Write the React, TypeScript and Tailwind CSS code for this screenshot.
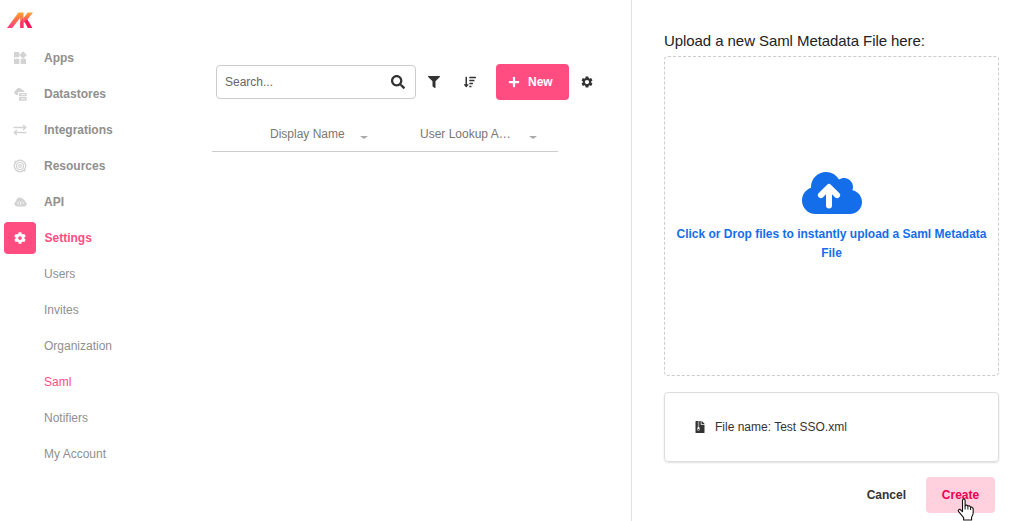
import type { ReactNode } from "react";
import { FaSearch, FaFilter, FaSortAmountDown, FaPlus, FaCog, FaFileArchive } from "react-icons/fa";
import { MdWidgets, MdSettings } from "react-icons/md";

function Logo() {
  return (
    <svg width="26" height="16" viewBox="0 0 26 16">
      <defs>
        <linearGradient id="flame" x1="0" y1="0" x2="0" y2="1">
          <stop offset="0" stopColor="#ffa52e" />
          <stop offset="0.5" stopColor="#ff6a4f" />
          <stop offset="1" stopColor="#ff3d83" />
        </linearGradient>
      </defs>
      <path d="M0 16L11.5 0.5H16.5V16H13.2V5.8L5.2 16Z" fill="url(#flame)" />
      <path d="M16.5 6L20.8 0.5H26L19.6 8.6L16.5 11.2Z" fill="url(#flame)" />
      <path d="M17.4 9.6L20.4 7.2L25.4 16H20.8Z" fill="#f21b5b" />
      <path d="M13.2 10.5L16.5 6V16H13.2Z" fill="#fb2f62" opacity=".75" />
    </svg>
  );
}

function DatastoreIcon() {
  return (
    <svg width="13" height="13" viewBox="0 0 13 13" fill="currentColor">
      <path d="M2.4 7A2.3 2.3 0 0 1 1.6 2.6 3.6 3.6 0 0 1 8.2 2 2.2 2.2 0 0 1 10.5 4H5.2Q4 4 4 5.2V7Z" />
      <path fillRule="evenodd" d="M5.5 5H12a.6.6 0 0 1 .6.6v2.6H5V5.6A.6.6 0 0 1 5.5 5ZM7 6.3v.8h4.2v-.8Z" />
      <path fillRule="evenodd" d="M5 9H12.6v3.2a.6.6 0 0 1-.6.6H5.6a.6.6 0 0 1-.6-.6ZM7 10.5v.8h4.2v-.8Z" />
    </svg>
  );
}

function TransferIcon() {
  return (
    <svg width="14" height="12" viewBox="0 0 14 12" fill="none" stroke="currentColor" strokeWidth="1.6" strokeLinecap="round" strokeLinejoin="round">
      <path d="M1.2 3.5H12M10.6 1.5L12.7 3.5L10.6 5.5M12.8 8.5H2M3.4 6.5L1.3 8.5L3.4 10.5" />
    </svg>
  );
}

function TargetIcon() {
  return (
    <svg width="14" height="14" viewBox="0 0 14 14" fill="none" stroke="currentColor">
      <circle cx="7" cy="7" r="5.7" strokeWidth="1.4" />
      <circle cx="7" cy="7" r="3.5" strokeWidth="1.2" />
      <circle cx="7" cy="7" r="1.3" strokeWidth="1.2" />
      <path d="M1.8 2.2L2.8 3.2M11.2 11L12.2 12" strokeWidth="2" />
    </svg>
  );
}

function CloudCodeIcon() {
  return (
    <svg width="13" height="10" viewBox="0 0 13 10">
      <path d="M3 9.5A2.8 2.8 0 0 1 2 4.2 3.7 3.7 0 0 1 8.6 2 2.2 2.2 0 0 1 10.9 4.6 2.5 2.5 0 0 1 10.4 9.5Z" fill="currentColor" />
      <path d="M4.8 4.6L3.5 6L4.8 7.4M8.2 4.6L9.5 6L8.2 7.4M7 4.3L6 7.7" fill="none" stroke="#fff" strokeWidth=".8" />
    </svg>
  );
}

function UploadCloud() {
  return (
    <svg width="60" height="42" viewBox="0 32 640 448" className="shrink-0">
      <path
        d="M537.6 226.6c4.1-10.7 6.4-22.4 6.4-34.6 0-53-43-96-96-96-19.7 0-38.1 6-53.3 16.2C367 64.2 315.3 32 256 32c-88.4 0-160 71.6-160 160 0 2.7.1 5.4.2 8.1C40.2 219.8 0 273.2 0 336c0 79.5 64.5 144 144 144h368c70.7 0 128-57.3 128-128 0-61.9-44-113.6-102.4-125.4z"
        fill="currentColor"
      />
      <path d="M288 388V200M202 278L288 192L374 278" fill="none" stroke="#fff" strokeWidth="64" strokeLinecap="round" strokeLinejoin="round" />
    </svg>
  );
}

function HandCursor() {
  return (
    <svg className="absolute left-[31px] top-[21px]" width="18" height="24" viewBox="0 0 18 24">
      <path
        d="M5.5 2.2Q5.5 1 6.8 1T8.1 2.2V8Q8.3 7 9.5 7.1T10.9 8.4Q11.2 7.6 12.3 7.9T13.6 9.4Q14 8.9 14.9 9.3T16.2 10.8V14.8Q16.2 17 14.6 19V22H6.6V19.6L1.7 13.6Q.8 12.2 1.8 11.6T4.1 12.3L5.5 13.7Z"
        fill="#fff" stroke="#111" strokeWidth="1.1" strokeLinejoin="round"
      />
      <path d="M8.1 8V11.5M10.9 8.6V11.5M13.6 9.5V12" stroke="#111" strokeWidth="1" />
    </svg>
  );
}

const sections: { label: string; icon: ReactNode }[] = [
  { label: "Apps", icon: <MdWidgets size={16} /> },
  { label: "Datastores", icon: <DatastoreIcon /> },
  { label: "Integrations", icon: <TransferIcon /> },
  { label: "Resources", icon: <TargetIcon /> },
  { label: "API", icon: <CloudCodeIcon /> },
];
const settings = ["Users", "Invites", "Organization", "Saml", "Notifiers", "My Account"];

function Caret() {
  return <span className="mt-[7px] h-0 w-0 border-x-[4px] border-t-[3px] border-x-transparent border-t-[#aaa]" />;
}

export default function App() {
  return (
    <div className="flex h-[521px] w-[1029px] overflow-hidden bg-white font-['Liberation_Sans',Arial,sans-serif] text-[12px] text-[#333]">
      <aside className="w-[200px] shrink-0 text-[#8f8f8f]">
        <div className="flex h-10 items-start pl-[7px] pt-3"><Logo /></div>
        <nav>
          {sections.map((s) => (
            <div key={s.label} className="flex h-9 items-center gap-2 pl-1 font-bold">
              <span className="flex w-8 justify-center text-[#d3d3d3]">{s.icon}</span>
              {s.label}
            </div>
          ))}
          <div className="flex h-9 items-center gap-[8.5px] pl-1 font-bold text-[#ff4d82]">
            <span className="flex h-8 w-8 items-center justify-center rounded bg-[#ff4d82] text-white"><FaCog size={12} /></span>
            Settings
          </div>
          {settings.map((s) => (
            <div key={s} className={`flex h-9 items-center pl-11 ${s === "Saml" ? "text-[#ff4d82]" : ""}`}>{s}</div>
          ))}
        </nav>
      </aside>

      <main className="w-[431px] shrink-0 pl-3 pt-16">
        <div className="flex h-9 items-center pl-1">
          <div className="flex h-[34px] w-[200px] items-center justify-between rounded border border-[#ccc] pl-2 pr-[10px] text-[#666]">
            Search...
            <FaSearch size={14} className="text-[#333]" />
          </div>
          <FaFilter size={12} className="ml-3 text-[#333]" />
          <FaSortAmountDown size={12} className="ml-6 text-[#333]" />
          <button className="ml-5 flex h-9 w-[73px] items-center gap-2 rounded bg-[#ff4d82] pl-3 font-bold text-white">
            <FaPlus size={12} />
            New
          </button>
          <MdSettings size={14} className="ml-[11px] text-[#333]" />
        </div>
        <div className="flex h-[52px] w-[346px] items-center border-b border-[#ccc] pl-[58px] pt-4 text-[#777]">
          <span className="w-[90px]">Display Name</span>
          <Caret />
          <span className="ml-[52px] w-[109px]">User Lookup A…</span>
          <Caret />
        </div>
      </main>

      <section className="flex w-[398px] shrink-0 flex-col border-l border-[#e2e2e2] pl-8 pr-[30px] pt-8">
        <h1 className="h-6 text-[15px] leading-[18px] tracking-[-0.07px] text-[#222]">Upload a new Saml Metadata File here:</h1>
        <div className="flex h-[320px] w-[335px] shrink-0 flex-col items-center rounded border border-dashed border-[#ccc] px-2 pt-[115px] text-center text-[#146eea]">
          <UploadCloud />
          <p className="mt-[11px] font-bold leading-[19px]">Click or Drop files to instantly upload a Saml Metadata File</p>
        </div>
        <div className="mt-4 flex h-[70px] w-[335px] shrink-0 items-center gap-[9px] rounded border border-[#ddd] pl-[29px] shadow-[0_1px_2px_rgba(0,0,0,0.12)]">
          <FaFileArchive size={12} className="w-3" />
          File name: Test SSO.xml
        </div>
        <div className="mt-[15px] flex h-9 shrink-0 items-center justify-end pr-1 font-bold">
          <button className="mr-5">Cancel</button>
          <button className="relative h-9 w-[69px] rounded bg-[#ffd0de] text-[#ea0050]">
            Create
            <HandCursor />
          </button>
        </div>
      </section>
    </div>
  );
}
